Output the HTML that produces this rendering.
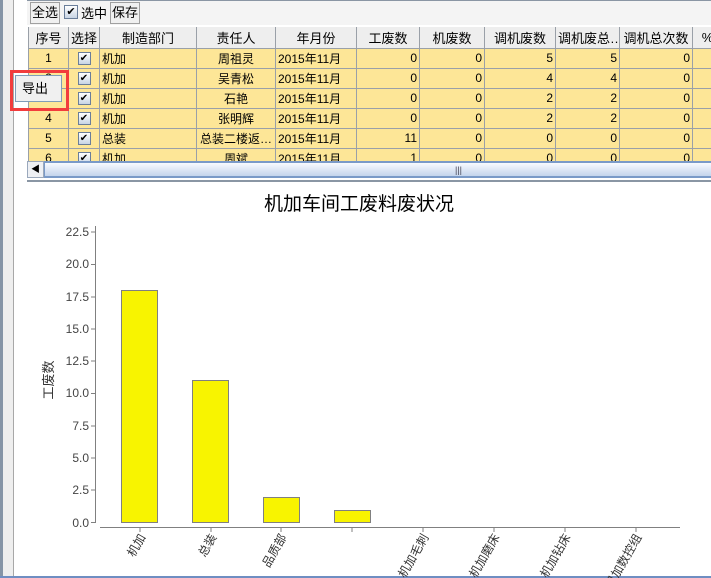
<!DOCTYPE html>
<html><head><meta charset="utf-8"><style>
*{margin:0;padding:0;box-sizing:border-box}
body{width:711px;height:578px;overflow:hidden;background:#fff;position:relative;font-family:"Liberation Sans","Noto Sans CJK SC",sans-serif;font-size:12px;color:#000}
.abs{position:absolute}
.btn{position:absolute;top:2px;height:22px;border:1px solid #a0a0a0;background:#f0f0f0;font-size:13px;line-height:20px;text-align:center}
table{border-collapse:collapse;table-layout:fixed;position:absolute;left:28px;top:27px;width:694px}
td,th{border:1px solid #9aa0a8;height:20px;padding:0 2px;white-space:nowrap;overflow:hidden;font-weight:normal;font-size:12px}
th{background:#eeeeee;height:21px;font-size:13px;border-top:none}
td{background:#fde697}
.c{text-align:center}.r{text-align:right}
.cb{display:inline-block;width:13px;height:13px;border:1px solid #6a7e9a;background:linear-gradient(#fff,#c8d4e4);font-size:10px;line-height:11px;text-align:center;vertical-align:middle}
</style></head><body>
<div class="abs" style="left:0;top:0;width:3px;height:578px;background:#8594a6"></div>
<div class="abs" style="left:3px;top:0;width:10px;height:578px;background:#eeeeee"></div>
<div class="abs" style="left:13px;top:0;width:1px;height:578px;background:#a8a8a8"></div>
<div class="abs" style="left:27px;top:0;width:684px;height:25px;background:#f4f4f4;border-top:1px solid #8a96a4"></div>
<div class="btn" style="left:30px;width:30px">全选</div>
<div class="abs" style="left:64px;top:5px;width:14px;height:14px;border:1px solid #6a7e9a;background:linear-gradient(#fff,#c8d4e4);font-size:11px;line-height:12px;text-align:center">✔</div>
<div class="abs" style="left:81px;top:3px;font-size:13px">选中</div>
<div class="btn" style="left:110px;width:30px">保存</div>
<table>
<colgroup><col style="width:40px"><col style="width:31px"><col style="width:97px"><col style="width:79px"><col style="width:81px"><col style="width:63px"><col style="width:65px"><col style="width:71px"><col style="width:64px"><col style="width:73px"><col style="width:30px"></colgroup>
<tr><th>序号</th><th>选择</th><th>制造部门</th><th>责任人</th><th>年月份</th><th>工废数</th><th>机废数</th><th>调机废数</th><th>调机废总…</th><th>调机总次数</th><th>%</th></tr>
<tr><td class="c">1</td><td class="c"><span class="cb">✔</span></td><td>机加</td><td class="c">周祖灵</td><td>2015年11月</td><td class="r">0</td><td class="r">0</td><td class="r">5</td><td class="r">5</td><td class="r">0</td><td></td></tr>
<tr><td class="c">2</td><td class="c"><span class="cb">✔</span></td><td>机加</td><td class="c">吴青松</td><td>2015年11月</td><td class="r">0</td><td class="r">0</td><td class="r">4</td><td class="r">4</td><td class="r">0</td><td></td></tr>
<tr><td class="c">3</td><td class="c"><span class="cb">✔</span></td><td>机加</td><td class="c">石艳</td><td>2015年11月</td><td class="r">0</td><td class="r">0</td><td class="r">2</td><td class="r">2</td><td class="r">0</td><td></td></tr>
<tr><td class="c">4</td><td class="c"><span class="cb">✔</span></td><td>机加</td><td class="c">张明辉</td><td>2015年11月</td><td class="r">0</td><td class="r">0</td><td class="r">2</td><td class="r">2</td><td class="r">0</td><td></td></tr>
<tr><td class="c">5</td><td class="c"><span class="cb">✔</span></td><td>总装</td><td class="c">总装二楼返…</td><td>2015年11月</td><td class="r">11</td><td class="r">0</td><td class="r">0</td><td class="r">0</td><td class="r">0</td><td></td></tr>
<tr><td class="c">6</td><td class="c"><span class="cb">✔</span></td><td>机加</td><td class="c">周斌</td><td>2015年11月</td><td class="r">1</td><td class="r">0</td><td class="r">0</td><td class="r">0</td><td class="r">0</td><td></td></tr>
</table>
<div class="abs" style="left:27px;top:161px;width:684px;height:17px;background:linear-gradient(#f4f7fb,#c9d7ea);border-top:1px solid #7a9ac8;border-bottom:1px solid #7a9ac8"></div>
<div class="abs" style="left:27px;top:161px;width:17px;height:17px;background:#eef0f4;border:1px solid #9aa8bc;font-size:9px;line-height:15px;text-align:center">◀</div>
<div class="abs" style="left:44px;top:162px;width:667px;height:15px;background:linear-gradient(#f8faff,#c4d4ec);border:1px solid #7a9ac8;border-right:none"></div>
<div class="abs" style="left:455px;top:165px;font-size:9px;color:#445">|||</div>
<div class="abs" style="left:27px;top:180px;width:684px;height:2px;background:#8a96a4"></div>
<div class="abs" style="left:0;top:576px;width:711px;height:2px;background:#6f8ec2"></div>

<svg class="abs" style="left:0;top:0" width="711" height="578">
<text x="359" y="210" font-size="19" text-anchor="middle" font-family="Liberation Sans,Noto Sans CJK SC,sans-serif">机加车间工废料废状况</text>
<g stroke="#808080" fill="none">
<line x1="95.5" y1="226" x2="95.5" y2="523"/>
<line x1="100" y1="527.5" x2="680" y2="527.5"/>
</g>
<g font-size="12" fill="#444" text-anchor="end" font-family="Liberation Sans,sans-serif">
<text x="89" y="236">22.5</text><text x="89" y="268">20.0</text><text x="89" y="301">17.5</text><text x="89" y="333">15.0</text><text x="89" y="365">12.5</text><text x="89" y="397">10.0</text><text x="89" y="430">7.5</text><text x="89" y="462">5.0</text><text x="89" y="494">2.5</text><text x="89" y="527">0.0</text>
</g>
<g stroke="#808080">
<line x1="91" y1="232" x2="95" y2="232"/><line x1="91" y1="264.5" x2="95" y2="264.5"/><line x1="91" y1="297" x2="95" y2="297"/><line x1="91" y1="329" x2="95" y2="329"/><line x1="91" y1="361" x2="95" y2="361"/><line x1="91" y1="393.5" x2="95" y2="393.5"/><line x1="91" y1="426" x2="95" y2="426"/><line x1="91" y1="458" x2="95" y2="458"/><line x1="91" y1="490" x2="95" y2="490"/><line x1="91" y1="522.5" x2="95" y2="522.5"/>
<line x1="140" y1="528" x2="140" y2="532"/><line x1="211" y1="528" x2="211" y2="532"/><line x1="281" y1="528" x2="281" y2="532"/><line x1="352" y1="528" x2="352" y2="532"/><line x1="423" y1="528" x2="423" y2="532"/><line x1="494" y1="528" x2="494" y2="532"/><line x1="565" y1="528" x2="565" y2="532"/><line x1="636" y1="528" x2="636" y2="532"/>
</g>
<g fill="#f8f400" stroke="#808080">
<rect x="121.5" y="290.5" width="36" height="232"/>
<rect x="192.5" y="380.5" width="36" height="142"/>
<rect x="263.5" y="497.5" width="36" height="25"/>
<rect x="334.5" y="510.5" width="36" height="12"/>
</g>
<text transform="translate(53,380) rotate(-90)" font-size="13" text-anchor="middle" fill="#333" font-family="Liberation Sans,Noto Sans CJK SC,sans-serif">工废数</text>
<g font-size="12" fill="#333" text-anchor="end" font-family="Liberation Sans,Noto Sans CJK SC,sans-serif">
<text transform="translate(146,537) rotate(-60)">机加</text>
<text transform="translate(217,537) rotate(-60)">总装</text>
<text transform="translate(287,537) rotate(-60)">品质部</text>
<text transform="translate(429,537) rotate(-60)">机加毛刺</text>
<text transform="translate(500,537) rotate(-60)">机加磨床</text>
<text transform="translate(571,537) rotate(-60)">机加钻床</text>
<text transform="translate(642,537) rotate(-60)">机加数控组</text>
</g>
</svg>
<div class="abs" style="left:10px;top:70px;width:59px;height:41px;border:3px solid #f23c3c"></div>
<div class="abs" style="left:15px;top:75px;width:47px;height:27px;background:#f0f0f0;border:1px solid #7f9db9;font-size:13px;line-height:25px;padding-left:6px">导出</div>
</body></html>
